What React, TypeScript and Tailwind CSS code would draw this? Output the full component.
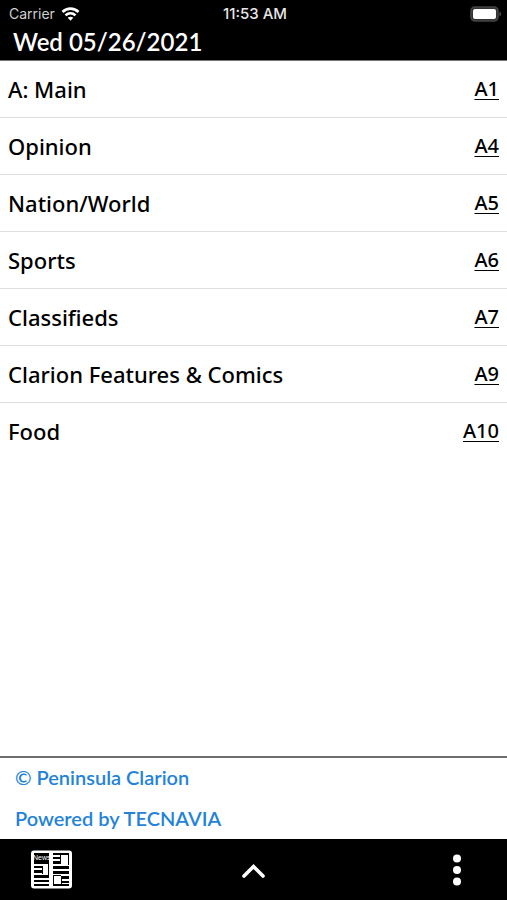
const sections = [
  { title: "A: Main", page: "A1" },
  { title: "Opinion", page: "A4" },
  { title: "Nation/World", page: "A5" },
  { title: "Sports", page: "A6" },
  { title: "Classifieds", page: "A7" },
  { title: "Clarion Features & Comics", page: "A9" },
  { title: "Food", page: "A10" },
];

function WifiIcon() {
  return (
    <svg width="19" height="14" viewBox="0 0 18 14" fill="none" stroke="#fff" strokeWidth="2.7" aria-hidden="true">
      <path d="M1 5C5.600 .6 12.400 .6 17 5" />
      <path d="M4 8.400c2.900-2.800 7.100-2.800 10 0" />
      <path d="M6.200 10.800c1.600-1.500 4-1.500 5.600 0L9 13.700z" fill="#fff" stroke="none" />
    </svg>
  );
}

function BatteryIcon() {
  return (
    <svg width="31" height="16" viewBox="0 0 31 16" aria-hidden="true">
      <rect x="1" y="1" width="27" height="14" rx="4" fill="#333" stroke="#444" strokeWidth="1.6" />
      <rect x="3" y="3" width="23" height="10" rx="2" fill="#fff" />
      <path d="M29.500 5.500c2 .8 2 4.200 0 5z" fill="#555" />
    </svg>
  );
}

function NewsIcon() {
  return (
    <svg width="41" height="39" viewBox="0 0 41 39" aria-hidden="true">
      <rect x="0" y="0.500" width="41" height="38" rx="3" fill="#fff" />
      <g fill="#000">
        <rect x="3" y="3" width="15" height="11" />
        <rect x="3" y="16" width="8" height="2" />
        <rect x="3" y="20" width="8" height="3" />
        <rect x="3" y="25" width="15" height="3" />
        <rect x="3" y="30" width="15" height="2" />
        <rect x="3" y="34" width="15" height="2" />
        <rect x="22" y="3" width="16" height="2" />
        <rect x="22" y="7" width="8" height="2" />
        <rect x="22" y="11" width="8" height="3" />
        <rect x="22" y="16" width="16" height="3" />
        <rect x="22" y="21" width="16" height="3" />
        <rect x="31" y="26" width="7" height="3" />
        <rect x="31" y="31" width="7" height="2" />
        <rect x="22" y="34" width="16" height="2" />
      </g>
      <g fill="none" stroke="#000">
        <path d="M17.500 14v11M11.500 16v8M37.500 4v11M29.500 4v10M22.500 25v10M22 25.500h8M30.500 26v9" />
      </g>
      <text x="2" y="10" fill="#fff" fontSize="7" fontFamily="Liberation Sans, sans-serif">
        News
      </text>
    </svg>
  );
}

export default function App() {
  return (
    <div className="flex min-h-screen flex-col bg-white font-['Lato','Noto_Sans',sans-serif] text-black">
      <header className="h-[61px] border-b border-[#777] bg-black text-white">
        <div className="grid h-7 grid-cols-3 items-center pr-[6px] pl-[9px] font-['Inter',sans-serif] text-sm leading-5">
          <div className="flex items-center gap-1.5 text-[#cfcfcf]">
            Carrier
            <WifiIcon />
          </div>
          <time className="text-center text-[15px] font-medium text-[#e6e6e6]">11:53 AM</time>
          <div className="flex justify-end">
            <BatteryIcon />
          </div>
        </div>
        <h1 className="px-[13px] text-2xl leading-7 font-semibold">Wed 05/26/2021</h1>
      </header>

      <main className="flex-1 font-['Noto_Sans',sans-serif]">
        <ul>
          {sections.map((s) => (
            <li
              key={s.page}
              className="flex h-[57px] items-center justify-between border-b border-[#dedede] px-2 text-[22px] leading-7 font-medium last:border-transparent"
            >
              <span>{s.title}</span>
              <a href="#page" className="text-xl underline decoration-1 underline-offset-3">
                {s.page}
              </a>
            </li>
          ))}
        </ul>
      </main>

      <footer>
        <div className="flex h-[83px] flex-col justify-between border-t-2 border-[#6e6e6e] px-[15px] pt-[5px] pb-[7px] text-xl leading-7 font-semibold text-[#2483d8]">
          <a href="#clarion">© Peninsula Clarion</a>
          <a href="#tecnavia">Powered by TECNAVIA</a>
        </div>
        <nav className="grid h-[61px] grid-cols-3 items-center bg-black px-[31px]">
          <button type="button" aria-label="Editions" className="justify-self-start">
            <NewsIcon />
          </button>
          <button type="button" aria-label="Expand" className="justify-self-center">
            <svg width="24" height="18" viewBox="0 0 24 18" fill="none" stroke="#fff" strokeWidth="3.6" strokeLinecap="round" aria-hidden="true">
              <path d="M3 15 12.500 5.500l9.500 9.500" />
            </svg>
          </button>
          <button type="button" aria-label="More" className="justify-self-end px-[15px]">
            <svg width="8" height="32" viewBox="0 0 8 32" fill="#fff" aria-hidden="true">
              <circle cx="4" cy="4.500" r="4" />
              <circle cx="4" cy="16" r="4" />
              <circle cx="4" cy="27.500" r="4" />
            </svg>
          </button>
        </nav>
      </footer>
    </div>
  );
}
